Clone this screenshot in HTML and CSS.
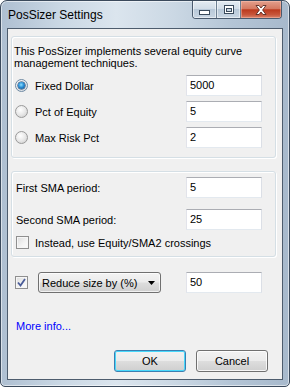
FILE: index.html
```html
<!DOCTYPE html>
<html>
<head>
<meta charset="utf-8">
<link rel="stylesheet" href="styles.css">
</head>
<body>
<div class="window">
  <div class="titlebar">
    <span class="title">PosSizer Settings</span>
    <div class="caption-buttons">
      <span class="cb cb-min">
        <svg width="11" height="5" viewBox="0 0 11 5"><rect x="0.5" y="0.5" width="10" height="4" fill="#fff" stroke="#3a4a5c"/></svg>
      </span>
      <span class="cb cb-max">
        <svg width="10" height="9" viewBox="0 0 10 9"><rect x="0.5" y="0.5" width="9" height="8" fill="#fff" stroke="#3a4a5c"/><rect x="2.5" y="3.5" width="5" height="3" fill="#c9d5e1" stroke="#3a4a5c"/></svg>
      </span>
      <span class="cb cb-close">
        <svg width="12" height="10" viewBox="0 0 12 10"><path d="M1 0.5 H4 L6 3 L8 0.5 H11 L7.6 5 L11 9.5 H8 L6 7 L4 9.5 H1 L4.4 5 Z" fill="#fff" stroke="#5a2a22" stroke-width="0.9" stroke-linejoin="round"/></svg>
      </span>
    </div>
  </div>
  <div class="client">
    <div class="group g1">
      <div class="intro">This PosSizer implements several equity curve management techniques.</div>
      <div class="options">
        <div class="row">
          <span class="radio checked"></span>
          <span class="label">Fixed Dollar</span>
          <span class="edit">5000</span>
        </div>
        <div class="row">
          <span class="radio"></span>
          <span class="label">Pct of Equity</span>
          <span class="edit">5</span>
        </div>
        <div class="row">
          <span class="radio"></span>
          <span class="label">Max Risk Pct</span>
          <span class="edit">2</span>
        </div>
      </div>
    </div>
    <div class="group g2">
      <div class="row sma">
        <span class="label">First SMA period:</span>
        <span class="edit">5</span>
      </div>
      <div class="row sma second">
        <span class="label">Second SMA period:</span>
        <span class="edit">25</span>
      </div>
      <div class="check-row">
        <span class="checkbox"></span>
        <span class="label">Instead, use Equity/SMA2 crossings</span>
      </div>
    </div>
    <div class="reduce-row">
      <span class="checkbox checked">
        <svg width="9" height="9" viewBox="0 0 9 9"><path d="M1 4.5 L3.5 7.5 L8 1" fill="none" stroke="#4a5c98" stroke-width="1.8"/></svg>
      </span>
      <span class="combo">
        <span class="combo-text">Reduce size by (%)</span>
        <svg class="arrow" width="7" height="4" viewBox="0 0 7 4"><path d="M0 0 H7 L3.5 4 Z" fill="#000"/></svg>
      </span>
      <span class="edit">50</span>
    </div>
    <a class="more">More info...</a>
    <div class="buttons">
      <span class="btn default">OK</span>
      <span class="btn">Cancel</span>
    </div>
  </div>
</div>
</body>
</html>
```
FILE: styles.css
```css
* { box-sizing: border-box; }
html, body { margin: 0; padding: 0; background: #fff; }
body {
  font-family: "Liberation Sans", Arial, sans-serif;
  font-size: 11px;
  color: #000;
}
.window {
  width: 290px;
  height: 387px;
  border: 1px solid #3b4a5c;
  border-radius: 7px 7px 5px 5px;
  background: linear-gradient(to right, #aebfd1 0%, #c9d7e4 20%, #dbe5ee 40%, #cbd8e4 60%, #b4c5d6 80%, #a7b9cc 100%);
  box-shadow: inset 0 0 0 1px rgba(255,255,255,0.55);
  padding: 0 6px 6px;
  display: flex;
  flex-direction: column;
}
.titlebar {
  height: 27px;
  display: flex;
  align-items: flex-start;
}
.title {
  padding: 7px 0 0 1px;
  font-size: 12px;
  line-height: 15px;
  color: #000;
}
.caption-buttons {
  margin-left: auto;
  margin-right: 1px;
  display: flex;
  height: 18px;
  border: 1px solid #4a5a6e;
  border-top: none;
  border-radius: 0 0 4px 4px;
  overflow: hidden;
}
.cb {
  display: flex;
  align-items: center;
  justify-content: center;
  height: 100%;
}
.cb-min, .cb-max {
  width: 24px;
  background: linear-gradient(to bottom, #e4ebf2 0%, #d2dde8 45%, #b9c9d9 50%, #c9d6e3 100%);
  border-right: 1px solid #6d7f92;
  box-shadow: inset 0 0 0 1px rgba(255,255,255,0.5);
}
.cb-min svg { margin-top: 5px; }
.cb-close {
  width: 40px;
  background: linear-gradient(to bottom, #e3a08d 0%, #d57a62 45%, #bc3a1e 52%, #c8553a 80%, #d8826a 100%);
  box-shadow: inset 0 0 0 1px rgba(255,200,185,0.45);
}
.client {
  flex: 1;
  border: 1px solid #4d5c6d;
  background: #f0f0f0;
  padding: 0 14px 7px 3px;
  display: flex;
  flex-direction: column;
}
.group {
  width: 265px;
  border: 1px solid #d5dfe5;
  border-radius: 3px;
  box-shadow: 1px 1px 0 #fff, inset 1px 1px 0 #fff;
}
.g1 {
  margin-top: 7px;
  height: 122px;
  padding: 8px 13px 0 2px;
}
.intro { line-height: 12px; }
.options {
  margin-top: 6px;
  display: flex;
  flex-direction: column;
  gap: 5px;
}
.row {
  height: 21px;
  display: flex;
  align-items: center;
}
.label { flex: 1; white-space: nowrap; }
.radio {
  width: 13px;
  height: 13px;
  margin-left: 1px;
  margin-right: 7px;
  border-radius: 50%;
  border: 1px solid #9a9a9a;
  background: radial-gradient(circle at 40% 35%, #ffffff 0%, #e8e8e8 50%, #c8c8c8 100%);
  position: relative;
}
.radio.checked {
  border-color: #6f8aa3;
  background: radial-gradient(circle at 40% 35%, #ffffff 0%, #e4e8ec 60%, #c4ccd4 100%);
}
.radio.checked::after {
  content: "";
  position: absolute;
  left: 2px;
  top: 2px;
  width: 7px;
  height: 7px;
  border-radius: 50%;
  background: radial-gradient(circle at 45% 40%, #8fe0ff 0%, #2a8fd6 45%, #0d3f78 100%);
  box-shadow: 0 0 0 0.5px #0b2f5a;
}
.edit {
  width: 76px;
  height: 21px;
  background: #fff;
  border: 1px solid #e3e9ef;
  border-top-color: #abadb3;
  border-left-color: #e2e3ea;
  border-right-color: #dbdfe6;
  padding: 0 3px;
  line-height: 19px;
}
.g2 {
  margin-top: 13px;
  height: 86px;
  padding: 5px 13px 0 2px;
}
.sma .label { padding-left: 2px; }
.second { margin-top: 11px; }
.check-row {
  margin-top: 6px;
  height: 13px;
  display: flex;
  align-items: center;
}
.checkbox {
  width: 13px;
  height: 13px;
  border: 1px solid #8f8f8f;
  background: linear-gradient(135deg, #dcdcdc 0%, #f4f4f4 60%, #fbfbfb 100%);
  box-shadow: inset 0 0 0 1px #f6f6f6;
  display: flex;
  align-items: center;
  justify-content: center;
}
.check-row .checkbox { margin-left: 2px; margin-right: 6px; }
.reduce-row {
  margin-top: 15px;
  width: 265px;
  padding-right: 14px;
  height: 21px;
  display: flex;
  align-items: center;
}
.reduce-row .checkbox { margin-left: 4px; margin-right: 10px; }
.combo {
  width: 123px;
  height: 21px;
  border: 1px solid #707070;
  border-radius: 3px;
  background: linear-gradient(to bottom, #f3f3f3 0%, #ebebeb 48%, #dddddd 52%, #cfcfcf 100%);
  box-shadow: inset 0 0 0 1px rgba(255,255,255,0.7);
  display: flex;
  align-items: center;
  padding: 0 0 0 3px;
}
.combo-text { flex: 1; }
.arrow { margin-right: 5px; }
.reduce-row .edit { margin-left: auto; }
.more {
  margin-top: 27px;
  margin-left: 5px;
  color: #0000ff;
  line-height: 13px;
  align-self: flex-start;
}
.buttons {
  margin-top: auto;
  display: flex;
  justify-content: flex-end;
  gap: 10px;
}
.btn {
  width: 72px;
  height: 22px;
  border: 1px solid #707070;
  border-radius: 3px;
  background: linear-gradient(to bottom, #f2f2f2 0%, #ebebeb 48%, #dddddd 52%, #cfcfcf 100%);
  box-shadow: inset 0 0 0 1px rgba(255,255,255,0.8);
  display: flex;
  align-items: center;
  justify-content: center;
}
.btn.default {
  border-color: #3c7fb1;
  box-shadow: inset 0 0 0 1px #48d8fb;
}
```
